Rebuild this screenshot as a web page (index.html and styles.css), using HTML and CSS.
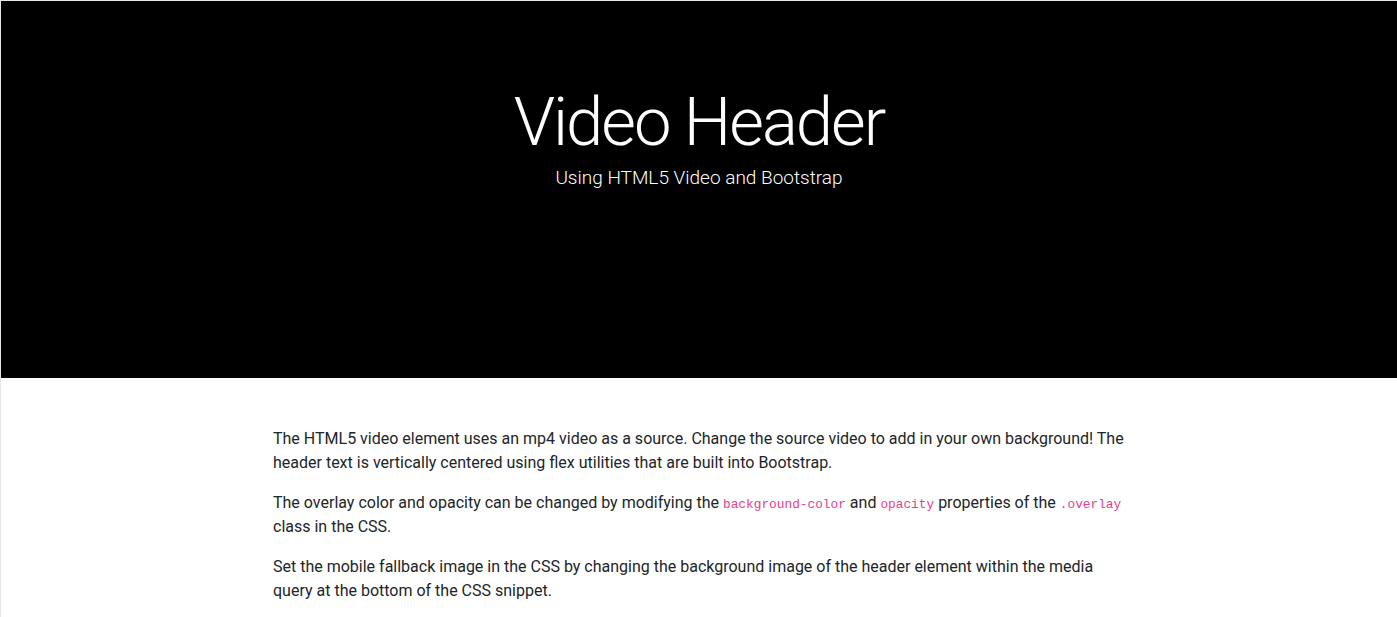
FILE: index.html
```html
<!DOCTYPE html>
<html lang="en">
<head>
<meta charset="utf-8">
<title>Video Header</title>
<link rel="stylesheet" href="styles.css">
</head>
<body>
<div class="frame">
  <header class="hero">
    <div class="hero-inner">
      <h1 class="hero-title">Video Header</h1>
      <p class="hero-lead">Using HTML5 Video and Bootstrap</p>
    </div>
  </header>
  <section class="content">
    <div class="container">
      <p>The HTML5 video element uses an mp4 video as a source. Change the source video to add in your own background! The header text is vertically centered using flex utilities that are built into Bootstrap.</p>
      <p>The overlay color and opacity can be changed by modifying the <code>background-color</code> and <code>opacity</code> properties of the <code>.overlay</code> class in the CSS.</p>
      <p>Set the mobile fallback image in the CSS by changing the background image of the header element within the media query at the bottom of the CSS snippet.</p>
    </div>
  </section>
</div>
</body>
</html>
```
FILE: styles.css
```css
html, body {
  margin: 0;
  padding: 0;
  background: #fff;
}
body {
  font-family: Roboto, "Noto Sans", sans-serif;
  font-size: 16px;
  line-height: 1.5;
  color: #212529;
  overflow: hidden;
}
.frame {
  border-top: 1px solid #e6e6e6;
  border-left: 1px solid #e6e6e6;
  height: 616px;
  overflow: hidden;
}
.hero {
  background: #000;
  height: 377px;
  display: flex;
  justify-content: center;
  color: #fff;
  text-align: center;
}
.hero-inner {
  padding-top: 88px;
}
.hero-title {
  margin: 0;
  font-family: Roboto, "Open Sans", sans-serif;
  font-weight: 300;
  font-size: 67px;
  line-height: 67px;
  letter-spacing: -2px;
}
.hero-lead {
  margin: 8px 0 0;
  font-family: Roboto, "Open Sans", sans-serif;
  font-weight: 300;
  font-size: 19px;
  line-height: 28px;
}
.content {
  padding: 49px 0 48px;
}
.container {
  max-width: 852px;
  margin: 0 auto;
}
.container p {
  margin: 0 0 16px;
}
code {
  font-family: "Liberation Mono", "DejaVu Sans Mono", monospace;
  font-size: 12.8px;
  color: #e83e8c;
}
```
